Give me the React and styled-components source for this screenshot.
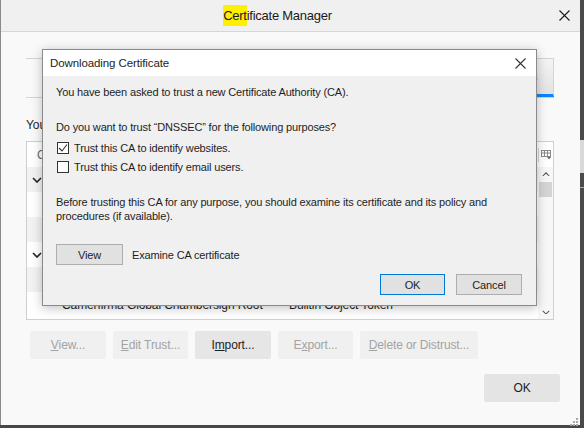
import React from 'react';
import styled, {createGlobalStyle} from 'styled-components';

const GlobalStyle = createGlobalStyle`
  html, body {
    margin: 0;
    padding: 0;
  }
  body {
    width: 584px;
    height: 428px;
    overflow: hidden;
    background: #474747;
    font-family: "Liberation Sans", Arial, sans-serif;
    color: #1e1e1e;
  }
  * { box-sizing: border-box; }
`;

const rows = [
  {group: true, name: 'AC Camerfirma S.A.'},
  {name: 'Chambers of Commerce Root - 2008', device: 'Builtin Object Token'},
  {name: 'Global Chambersign Root - 2008', device: 'Builtin Object Token'},
  {group: true, name: 'AC Camerfirma SA CIF A82743287'},
  {name: 'Camerfirma Chambers of Commerce Root', device: 'Builtin Object Token'},
  {name: 'Camerfirma Global Chambersign Root', device: 'Builtin Object Token'},
];

const tabs = ['Your Certificates', 'Authentication Decisions', 'People', 'Servers', 'Authorities'];

const actions = [
  {pre: '', key: 'V', post: 'iew...', width: 76},
  {pre: '', key: 'E', post: 'dit Trust...', width: 75},
  {pre: 'I', key: 'm', post: 'port...', width: 76, enabled: true},
  {pre: 'E', key: 'x', post: 'port...', width: 75},
  {pre: '', key: 'D', post: 'elete or Distrust...', width: 118},
];

const Screen = styled.div`
  display: flex;
  height: 428px;
`;

const Window = styled.div`
  position: relative;
  width: 580px;
  height: 425px;
  border-left: 1px solid #8a8a8a;
  background: #f9f9f9;
  display: flex;
  flex-direction: column;
  font-size: 12px;
  letter-spacing: -0.1px;
`;

const TitleBar = styled.div`
  height: 32px;
  flex: none;
  background: #f0f0f0;
  border-bottom: 1px solid #d6d6d6;
  display: flex;
  align-items: center;
  padding: 0 10px 0 0;
`;

const Title = styled.div`
  flex: 1;
  text-align: center;
  padding-right: 5px;
  font-size: 13px;
  letter-spacing: -0.25px;
  color: #1a1a1a;
`;

const Highlight = styled.span`
  background: #ffef00;
  padding: 3px 0 3px;
`;

const CloseIcon = ({size = 11, color = '#222'}) => (
  <svg width={size} height={size} viewBox="0 0 11 11">
    <path d="M0.5 0.5 L10.5 10.5 M10.5 0.5 L0.5 10.5" stroke={color} strokeWidth="1.1" fill="none"/>
  </svg>
);

const Body = styled.div`
  flex: 1;
  display: flex;
  flex-direction: column;
  padding: 26px 26px 0 25px;
`;

const TabStrip = styled.div`
  height: 40px;
  display: flex;
  padding-left: 40px;
  border-top: 1px solid #d4d4d4;
  border-bottom: 1px solid #d4d4d4;
`;

const Tab = styled.div`
  flex: ${p => p.grow};
  display: flex;
  align-items: center;
  justify-content: center;
  white-space: nowrap;
  color: #333;
  border-right: ${p => p.active ? '1px solid #d4d4d4' : 'none'};
  border-bottom: 3px solid ${p => p.active ? '#0a84ff' : 'transparent'};
  background: ${p => p.active ? 'linear-gradient(#f4f4f4, #e2e2e2)' : 'transparent'};
`;

const Caption = styled.div`
  margin-top: 19px;
  line-height: 16px;
  color: #1e1e1e;
`;

const Table = styled.div`
  margin-top: 8px;
  height: 179px;
  border: 1px solid #cfcfcf;
  background: #fff;
  display: flex;
  flex-direction: column;
  overflow: hidden;
`;

const HeaderRow = styled.div`
  height: 25px;
  flex: none;
  display: flex;
  align-items: center;
  color: #6a6a6a;
`;

const HeaderCell = styled.div`
  width: ${p => p.w}px;
  padding-left: ${p => p.pad}px;
`;

const Picker = styled.div`
  margin-left: auto;
  width: 15px;
  height: 14px;
  border-left: 1px solid #d8d8d8;
  display: flex;
  align-items: center;
  justify-content: center;
`;

const TableBody = styled.div`
  flex: 1;
  display: flex;
`;

const RowList = styled.div`
  flex: 1;
  display: flex;
  flex-direction: column;
`;

const Row = styled.div`
  height: 25px;
  flex: none;
  display: flex;
  align-items: center;
  color: #1e1e1e;
  background: ${p => p.odd ? '#f2f2f2' : '#fff'};
  white-space: nowrap;
`;

const Twisty = styled.div`
  width: 24px;
  padding-left: 5px;
  display: flex;
  align-items: center;
`;

const NameCell = styled.div`
  width: ${p => p.w}px;
  padding-left: ${p => p.pad}px;
  overflow: hidden;
`;

const ScrollTrack = styled.div`
  width: 15px;
  display: flex;
  flex-direction: column;
  align-items: center;
  background: #f7f7f7;
`;

const ScrollArrow = styled.div`
  height: 14px;
  display: flex;
  align-items: center;
  justify-content: center;
`;

const Thumb = styled.div`
  width: 13px;
  height: 15px;
  margin-top: 1px;
  background: #d4d4d4;
`;

const Spacer = styled.div`
  flex: 1;
`;

const ActionRow = styled.div`
  margin-top: 11px;
  padding-left: 4px;
  display: flex;
  gap: 7px;
`;

const ActionButton = styled.div`
  width: ${p => p.w}px;
  height: 28px;
  border-radius: 2px;
  display: flex;
  align-items: center;
  justify-content: center;
  color: ${p => p.enabled ? '#1e1e1e' : '#a3a3a3'};
  background: ${p => p.enabled ? '#e6e6e6' : '#f0f0f0'};
`;

const Footer = styled.div`
  margin-top: 15px;
  margin-right: -6px;
  display: flex;
  justify-content: flex-end;
`;

const FooterButton = styled(ActionButton)`
  background: #e4e4e4;
`;

const Grip = styled.div`
  position: absolute;
  right: 2px;
  bottom: 2px;
  width: 8px;
  height: 8px;
`;

const SideStrip = styled.div`
  width: 4px;
  height: 425px;
  display: flex;
  flex-direction: column;
  background: #4a4a4a;
`;

const SidePatch = styled.div`
  margin-top: 140px;
  height: 33px;
  background: #d9d9d9;
`;

const SideMark = styled.div`
  margin-top: 14px;
  width: 4px;
  height: 1px;
  background: #aaa;
`;

/* modal */

const Modal = styled.div`
  position: absolute;
  left: 41px;
  top: 49px;
  width: 495px;
  height: 257px;
  border: 1px solid #8b8b8b;
  background: #f0f0f0;
  box-shadow: 0 2px 10px rgba(0, 0, 0, 0.25);
  display: flex;
  flex-direction: column;
  font-size: 11px;
  letter-spacing: -0.15px;
  color: #1e1e1e;
`;

const ModalTitle = styled.div`
  height: 26px;
  flex: none;
  background: #fff;
  display: flex;
  align-items: center;
  justify-content: space-between;
  padding: 0 10px 0 7px;
  font-size: 11.5px;
  letter-spacing: -0.1px;
`;

const ModalBody = styled.div`
  flex: 1;
  display: flex;
  flex-direction: column;
  padding: 9px 14px 10px 13px;
  white-space: nowrap;
`;

const Line = styled.div`
  line-height: 15px;
  margin-top: ${p => p.gap || 0}px;
`;

const Para = styled.div`
  line-height: 14px;
  margin-top: 21px;
`;

const CheckRow = styled.div`
  display: flex;
  align-items: center;
  height: 15px;
  margin-top: ${p => p.gap}px;
  padding-left: 1px;
  gap: 5px;
`;

const Box = styled.div`
  width: 12px;
  height: 12px;
  border: 1px solid #333;
  background: #fff;
  display: flex;
  align-items: center;
  justify-content: center;
`;

const ViewRow = styled.div`
  margin-top: 21px;
  display: flex;
  align-items: center;
  gap: 9px;
`;

const DialogButton = styled.div`
  width: ${p => p.w}px;
  height: 21px;
  display: flex;
  align-items: center;
  justify-content: center;
  background: #e1e1e1;
  border: 1px solid ${p => p.primary ? '#0078d7' : '#adadad'};
`;

const DialogActions = styled.div`
  margin-top: 9px;
  display: flex;
  justify-content: flex-end;
  gap: 11px;
`;

const Chevron = ({down = true, size = 10, color = '#222', w = 1.6}) => (
  <svg width={size} height={size * 0.6} viewBox="0 0 10 6">
    <path d={down ? 'M1 1 L5 5 L9 1' : 'M1 5 L5 1 L9 5'} stroke={color} strokeWidth={w} fill="none"/>
  </svg>
);

const PickerIcon = () => (
  <svg width="11" height="10" viewBox="0 0 11 10">
    <rect x="0.5" y="0.5" width="9" height="6" fill="none" stroke="#8a8a8a"/>
    <path d="M0.5 3 H9.5 M3.5 0.5 V6.5 M6.5 0.5 V6.5" stroke="#8a8a8a"/>
    <path d="M6 7 L10 7 L8 9.5 Z" fill="#6a6a6a"/>
  </svg>
);

const GripIcon = () => (
  <svg width="8" height="8" viewBox="0 0 8 8">
    {[[6, 0], [6, 3], [3, 3], [6, 6], [3, 6], [0, 6]].map(([x, y], i) => (
      <rect key={i} x={x} y={y} width="2" height="2" fill="#a8a8a8"/>
    ))}
  </svg>
);

const Check = () => (
  <svg width="10" height="10" viewBox="0 0 10 10">
    <path d="M1 5 L4 8 L9 1.5" stroke="#333" strokeWidth="1.1" fill="none"/>
  </svg>
);

function DownloadDialog() {
  return (
    <Modal>
      <ModalTitle>
        <span>Downloading Certificate</span>
        <CloseIcon size={11} color="#333"/>
      </ModalTitle>
      <ModalBody>
        <Line>You have been asked to trust a new Certificate Authority (CA).</Line>
        <Line gap={20}>Do you want to trust “DNSSEC” for the following purposes?</Line>
        <CheckRow gap={5}>
          <Box><Check/></Box>
          <span>Trust this CA to identify websites.</span>
        </CheckRow>
        <CheckRow gap={4}>
          <Box/>
          <span>Trust this CA to identify email users.</span>
        </CheckRow>
        <Para>
          Before trusting this CA for any purpose, you should examine its certificate and its policy and<br/>
          procedures (if available).
        </Para>
        <ViewRow>
          <DialogButton w={67}>View</DialogButton>
          <span>Examine CA certificate</span>
        </ViewRow>
        <DialogActions>
          <DialogButton w={65} primary>OK</DialogButton>
          <DialogButton w={66}>Cancel</DialogButton>
        </DialogActions>
      </ModalBody>
    </Modal>
  );
}

export default function App() {
  return (
    <>
      <GlobalStyle/>
      <Screen>
        <Window>
          <TitleBar>
            <Title><Highlight>Cert</Highlight>ificate Manager</Title>
            <CloseIcon size={11} color="#1a1a1a"/>
          </TitleBar>
          <Body>
            <TabStrip>
              {tabs.map((t, i) => (
                <Tab key={t} grow={i === 1 ? 1.6 : 1} active={i === tabs.length - 1}>{t}</Tab>
              ))}
            </TabStrip>
            <Caption>You have certificates on file that identify these certificate authorities</Caption>
            <Table>
              <HeaderRow>
                <HeaderCell w={258} pad={10}>Certificate Name</HeaderCell>
                <HeaderCell w={200} pad={4}>Security Device</HeaderCell>
                <Picker><PickerIcon/></Picker>
              </HeaderRow>
              <TableBody>
                <RowList>
                  {rows.map((r, i) => (
                    <Row key={i} odd={i % 2 === 0}>
                      {r.group ? (
                        <>
                          <Twisty><Chevron/></Twisty>
                          <NameCell w={400} pad={0}>{r.name}</NameCell>
                        </>
                      ) : (
                        <>
                          <NameCell w={258} pad={35}>{r.name}</NameCell>
                          <NameCell w={200} pad={4}>{r.device}</NameCell>
                        </>
                      )}
                    </Row>
                  ))}
                </RowList>
                <ScrollTrack>
                  <ScrollArrow><Chevron down={false} size={8} color="#555" w={1.3}/></ScrollArrow>
                  <Thumb/>
                  <Spacer/>
                  <ScrollArrow><Chevron size={8} color="#555" w={1.3}/></ScrollArrow>
                </ScrollTrack>
              </TableBody>
            </Table>
            <ActionRow>
              {actions.map((a, i) => (
                <ActionButton key={i} w={a.width} enabled={a.enabled}>
                  {a.pre}<u>{a.key}</u>{a.post}
                </ActionButton>
              ))}
            </ActionRow>
            <Footer>
              <FooterButton w={76} enabled>OK</FooterButton>
            </Footer>
          </Body>
          <DownloadDialog/>
          <Grip><GripIcon/></Grip>
        </Window>
        <SideStrip>
          <SidePatch/>
          <SideMark/>
        </SideStrip>
      </Screen>
    </>
  );
}
